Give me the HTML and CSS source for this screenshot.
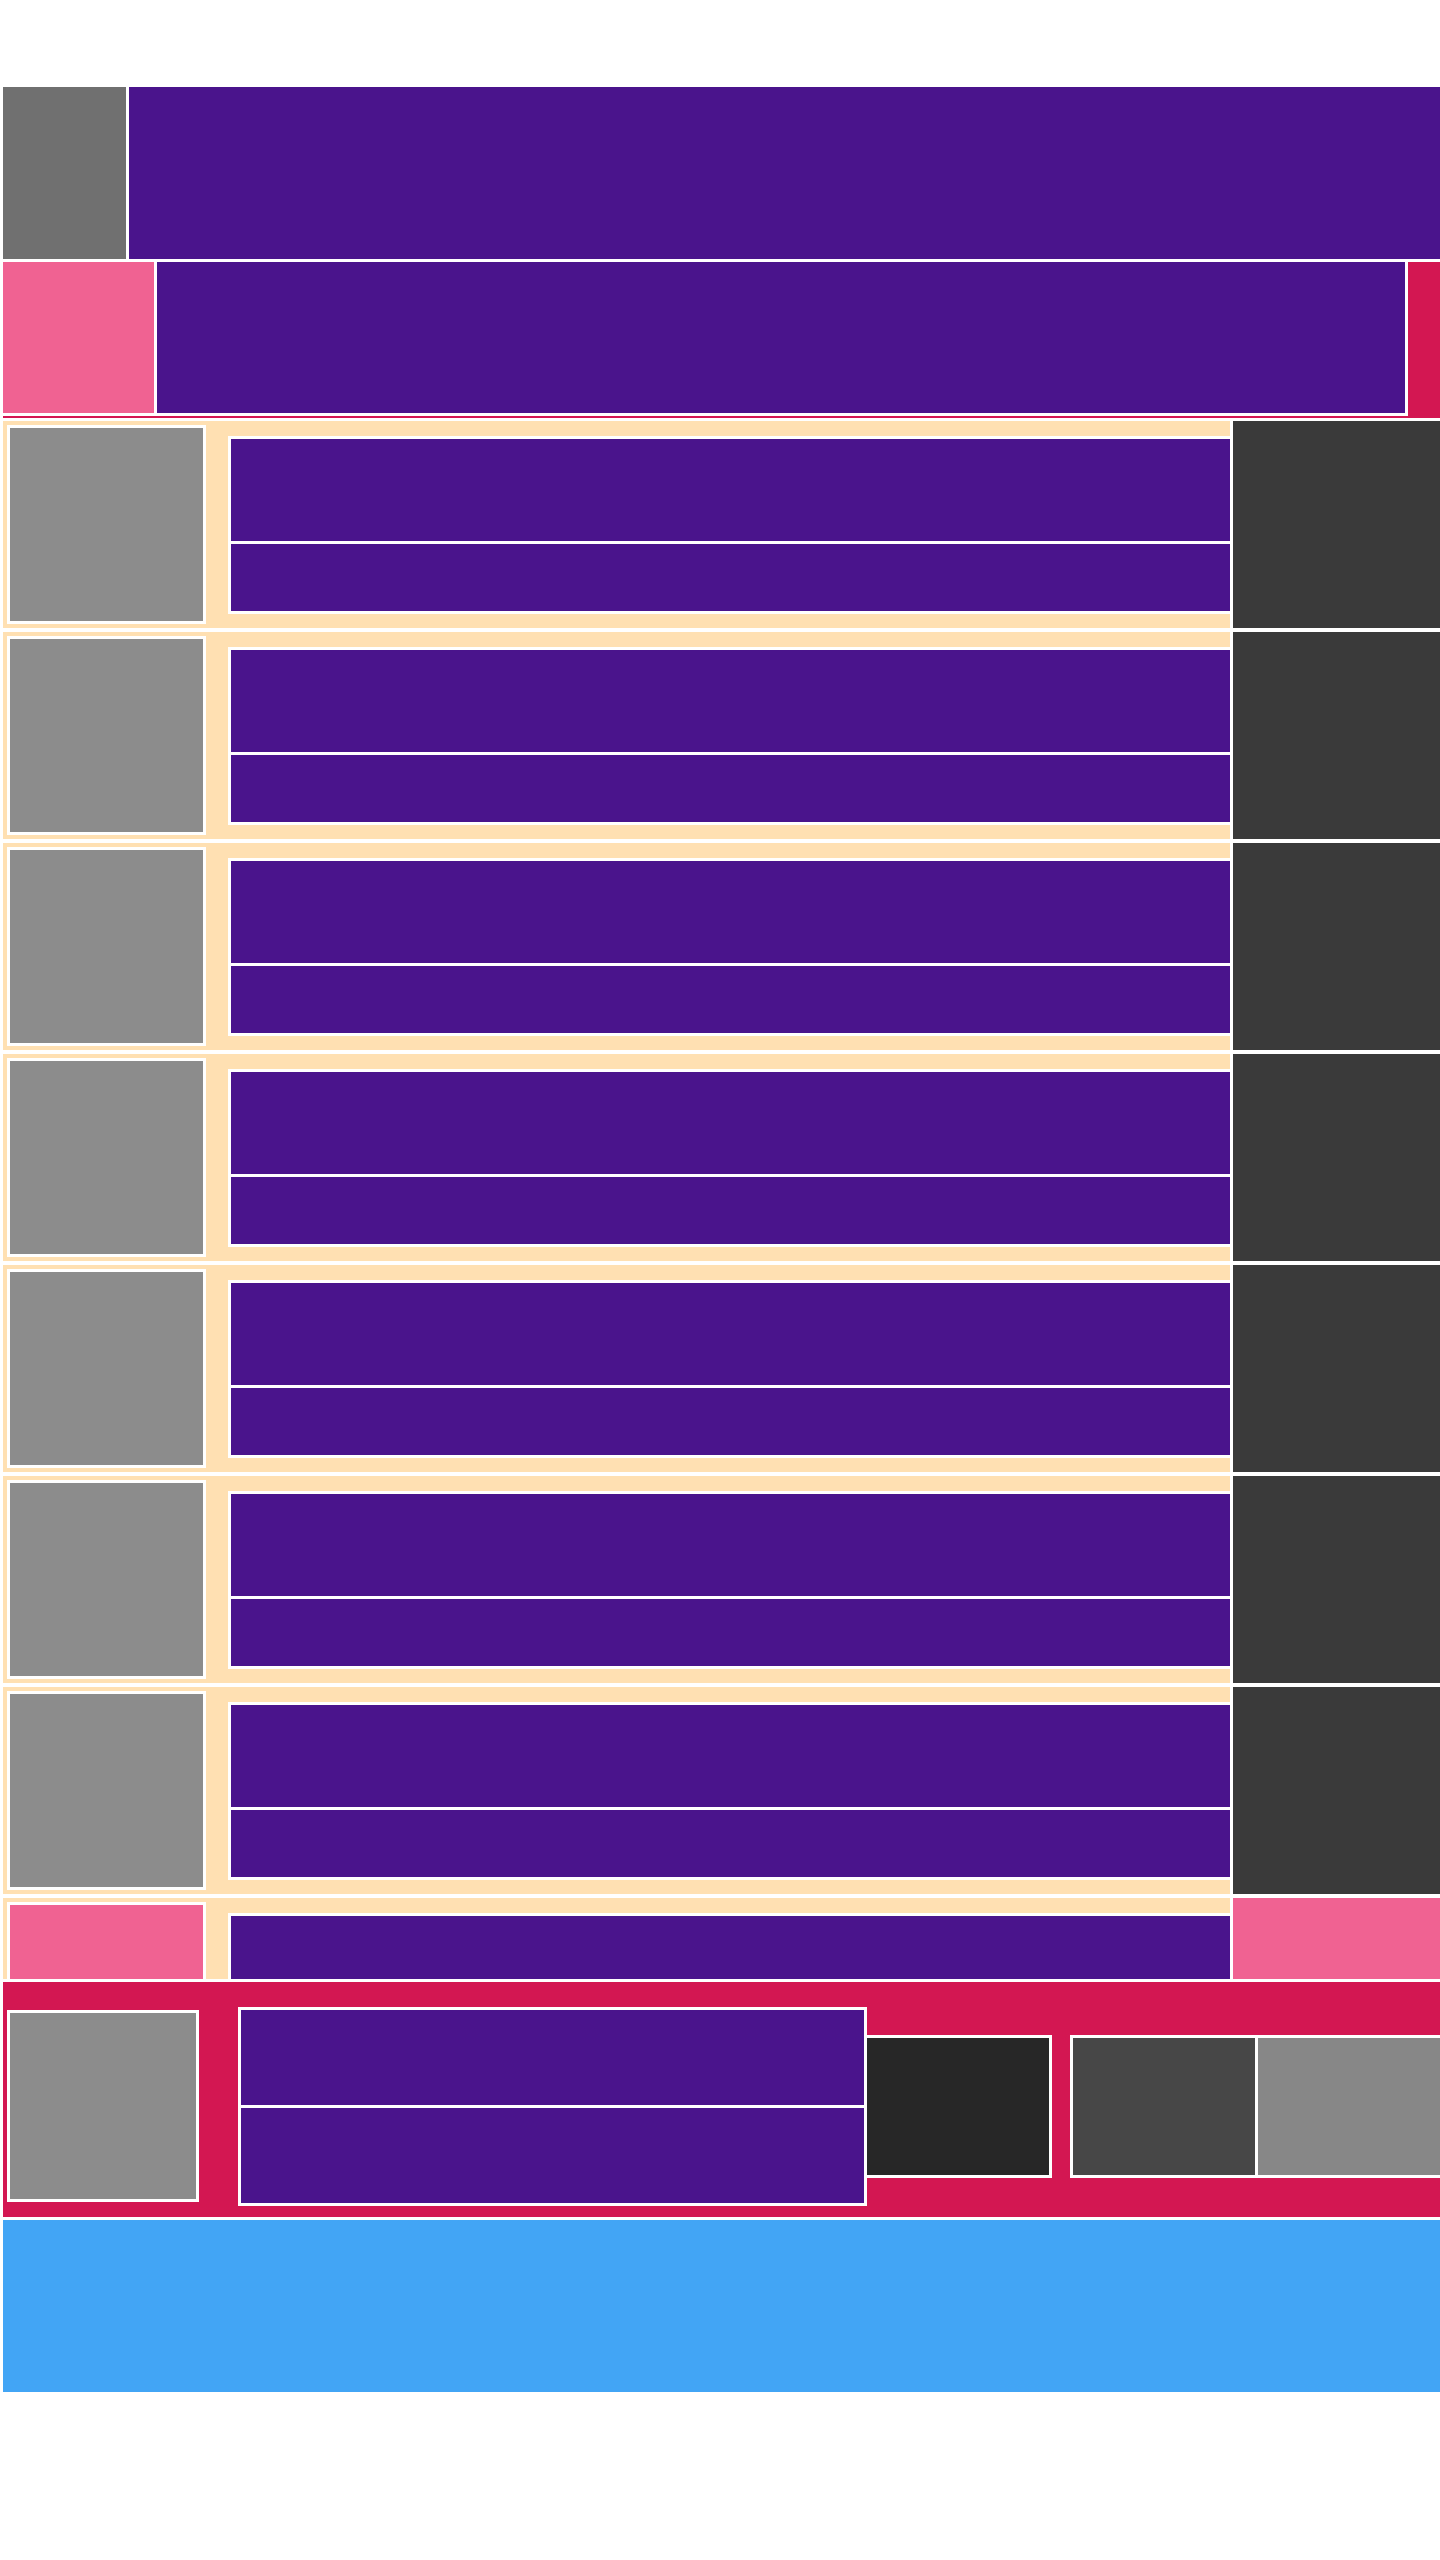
FILE: index.html
```html
<!DOCTYPE html>
<html lang="en">
<head>
  <meta charset="UTF-8">
  <meta name="viewport" content="width=device-width, initial-scale=1.0">
  <title>Playlist</title>
  <link rel="stylesheet" href="styles.css">
</head>
<body>
  <div class="page">
    <header class="top">
      <div class="logo"></div>
      <div class="title"></div>
    </header>

    <nav class="nav">
      <div class="nav-tag"></div>
      <div class="nav-bar"></div>
    </nav>

    <div class="list">
      <div class="item">
        <div class="item-main">
          <div class="thumb"></div>
          <div class="text">
            <div class="line-1"></div>
            <div class="line-2"></div>
          </div>
        </div>
        <div class="item-side"></div>
      </div>
      <div class="item">
        <div class="item-main">
          <div class="thumb"></div>
          <div class="text">
            <div class="line-1"></div>
            <div class="line-2"></div>
          </div>
        </div>
        <div class="item-side"></div>
      </div>
      <div class="item">
        <div class="item-main">
          <div class="thumb"></div>
          <div class="text">
            <div class="line-1"></div>
            <div class="line-2"></div>
          </div>
        </div>
        <div class="item-side"></div>
      </div>
      <div class="item">
        <div class="item-main">
          <div class="thumb"></div>
          <div class="text">
            <div class="line-1"></div>
            <div class="line-2"></div>
          </div>
        </div>
        <div class="item-side"></div>
      </div>
      <div class="item">
        <div class="item-main">
          <div class="thumb"></div>
          <div class="text">
            <div class="line-1"></div>
            <div class="line-2"></div>
          </div>
        </div>
        <div class="item-side"></div>
      </div>
      <div class="item">
        <div class="item-main">
          <div class="thumb"></div>
          <div class="text">
            <div class="line-1"></div>
            <div class="line-2"></div>
          </div>
        </div>
        <div class="item-side"></div>
      </div>
      <div class="item">
        <div class="item-main">
          <div class="thumb"></div>
          <div class="text">
            <div class="line-1"></div>
            <div class="line-2"></div>
          </div>
        </div>
        <div class="item-side"></div>
      </div>
      <div class="item item-active">
        <div class="item-main">
          <div class="thumb"></div>
          <div class="text">
            <div class="line-1"></div>
            <div class="line-2"></div>
          </div>
        </div>
        <div class="item-side"></div>
      </div>
    </div>

    <section class="player">
      <div class="player-cover"></div>
      <div class="player-info">
        <div class="player-line"></div>
        <div class="player-line"></div>
      </div>
      <div class="player-btn"></div>
      <div class="player-controls">
        <div class="control-a"></div>
        <div class="control-b"></div>
      </div>
    </section>

    <footer class="footer"></footer>
  </div>
</body>
</html>
```

FILE: styles.css
```css
body {
  margin: 0;
  background-color: #fff;
}
.page {
  padding: 87px 0 0 3px;
}

/* header */
.top {
  display: flex;
  gap: 3px;
  height: 172px;
  margin-bottom: 3px;
}
.logo {
  width: 123px;
  background-color: #707070;
}
.title {
  flex: 1;
  background-color: #4a148c;
}

/* nav */
.nav {
  display: flex;
  align-items: flex-start;
  height: 156px;
  margin-bottom: 3px;
  background-color: #d31752;
}
.nav-tag {
  width: 151px;
  height: 151px;
  background-color: #f06292;
  border-right: 3px solid #fff;
  border-bottom: 3px solid #fff;
}
.nav-bar {
  width: 1248px;
  height: 151px;
  background-color: #4a148c;
  border-right: 3px solid #fff;
  border-bottom: 3px solid #fff;
}

/* list */
.list {
  display: flex;
  flex-direction: column;
  gap: 4px;
  height: 1558px;
  overflow: hidden;
  margin-bottom: 3px;
}
.item {
  display: flex;
  gap: 3px;
  height: 207px;
  flex-shrink: 0;
}
.item-main {
  flex: 1;
  display: flex;
  align-items: flex-start;
  padding: 4px 0 0 4px;
  background-color: #ffe0b2;
}
.thumb {
  width: 193px;
  height: 193px;
  background-color: #8c8c8c;
  border: 3px solid #fff;
}
.text {
  flex: 1;
  margin: 11px 0 0 22px;
  border: 3px solid #fff;
  border-right: none;
}
.line-1 {
  height: 102px;
  background-color: #4a148c;
  border-bottom: 3px solid #fff;
}
.line-2 {
  height: 67px;
  background-color: #4a148c;
}
.item-side {
  width: 207px;
  background-color: #3a3a3a;
}
.item-active .thumb,
.item-active .item-side {
  background-color: #f06292;
}

/* player */
.player {
  display: flex;
  align-items: flex-start;
  height: 235px;
  margin-bottom: 3px;
  background-color: #d31752;
}
.player-cover {
  width: 186px;
  height: 186px;
  margin: 28px 0 0 4px;
  background-color: #8c8c8c;
  border: 3px solid #fff;
}
.player-info {
  width: 623px;
  margin: 25px 0 0 39px;
  border: 3px solid #fff;
}
.player-line {
  height: 95px;
  background-color: #4a148c;
}
.player-line + .player-line {
  border-top: 3px solid #fff;
}
.player-btn {
  width: 182px;
  height: 137px;
  margin-top: 53px;
  background-color: #272727;
  border: 3px solid #fff;
  border-left: none;
}
.player-controls {
  display: flex;
  gap: 3px;
  margin: 53px 0 0 18px;
  background-color: #fff;
  border: 3px solid #fff;
  border-right: none;
}
.control-a {
  width: 182px;
  height: 137px;
  background-color: #474747;
}
.control-b {
  width: 182px;
  height: 137px;
  background-color: #878787;
}

/* footer */
.footer {
  height: 172px;
  background-color: #42a5f5;
}
```
